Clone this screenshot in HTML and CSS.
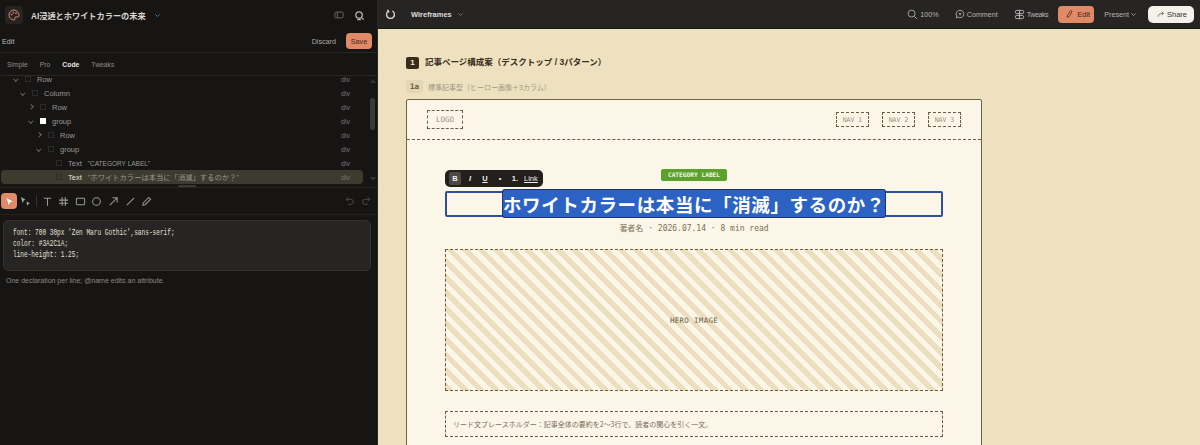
FILE: index.html
```html
<!DOCTYPE html>
<html lang="ja">
<head>
    <meta charset="UTF-8">
    <meta name="viewport" content="width=device-width, initial-scale=1.0">
    <title>Wireframes</title>
    <link rel="stylesheet" href="styles.css">
</head>
<body>
    <div class="app">
        <aside class="side">
            <div class="project">
                <div class="logo">
                    <svg width="12" height="12" viewBox="0 0 24 24" fill="none" stroke="#d98a6c" stroke-width="2"><path d="M12 2a10 10 0 1 0 0 20c2 0 2-1.5 1.5-3-.5-1.500.5-3 2.500-3H19a3 3 0 0 0 3-3c0-6-4.500-11-10-11z"/><circle cx="7.500" cy="11" r="1"/><circle cx="11" cy="7" r="1"/><circle cx="16" cy="8.500" r="1"/></svg>
                </div>
                <div class="project-title">AI浸透とホワイトカラーの未来</div>
                <svg class="chev" width="7" height="7" viewBox="0 0 10 10" fill="none" stroke="#777" stroke-width="1.300"><path d="M2 3.500l3 3 3-3"/></svg>
                <div class="project-icons">
                    <svg width="10" height="10" viewBox="0 0 12 12" fill="none" stroke="#666" stroke-width="1.200"><rect x="1" y="2.500" width="10" height="7" rx="1.500"/><path d="M4 2.500v7"/></svg>
                    <svg width="11" height="11" viewBox="0 0 12 12" fill="none" stroke="#b5b3ae" stroke-width="1.400"><circle cx="5.500" cy="5.500" r="3.500"/><path d="M8 8l2.500 2.500M3.500 10.500h4"/></svg>
                </div>
            </div>
            <div class="edit-bar">
                <span class="edit-label">Edit</span>
                <span class="discard">Discard</span>
                <button class="save">Save</button>
            </div>
            <div class="tabs">
                <span>Simple</span>
                <span>Pro</span>
                <span class="on">Code</span>
                <span>Tweaks</span>
            </div>
            <div class="tree">
                <div class="row lv0"><i class="arrow open"></i><b class="box"></b><span class="name">Row</span><em>div</em></div>
                <div class="row lv1"><i class="arrow open"></i><b class="box"></b><span class="name">Column</span><em>div</em></div>
                <div class="row lv2"><i class="arrow closed"></i><b class="box"></b><span class="name">Row</span><em>div</em></div>
                <div class="row lv2"><i class="arrow open"></i><b class="box white"></b><span class="name">group</span><em>div</em></div>
                <div class="row lv3"><i class="arrow closed"></i><b class="box"></b><span class="name">Row</span><em>div</em></div>
                <div class="row lv3"><i class="arrow open"></i><b class="box"></b><span class="name">group</span><em>div</em></div>
                <div class="row lv4"><i class="arrow"></i><b class="box"></b><span class="name">Text</span><span class="val">"CATEGORY LABEL"</span><em>div</em></div>
                <div class="row lv4 sel"><i class="arrow"></i><b class="box"></b><span class="name">Text</span><span class="val val-jp">"ホワイトカラーは本当に「消滅」するのか？"</span><em>div</em></div>
                <div class="scroll"><span class="up"></span><span class="thumb"></span><span class="down"></span></div>
                <span class="grip"></span>
            </div>
            <div class="tools">
                <span class="tool active"><svg width="9" height="9" viewBox="0 0 12 12" fill="#fff"><path d="M2 1l8 5-3.500 1L5 11z"/></svg></span>
                <span class="tool"><svg width="11" height="11" viewBox="0 0 12 12" fill="#aaa"><path d="M1 1l5 3-2 1-1 3zM7 6l4 2-2 .7L8 11z"/></svg></span>
                <span class="tool-sep"></span>
                <span class="tool"><svg width="11" height="11" viewBox="0 0 12 12" fill="none" stroke="#999" stroke-width="1.100"><path d="M2 2.500h8M6 2.500v8"/></svg></span>
                <span class="tool"><svg width="11" height="11" viewBox="0 0 12 12" fill="none" stroke="#999" stroke-width="1.100"><path d="M1 4.500h10M1 8h10M4.500 1v10M8 1v10"/></svg></span>
                <span class="tool"><svg width="11" height="11" viewBox="0 0 12 12" fill="none" stroke="#999" stroke-width="1.100"><rect x="1.500" y="2.500" width="9" height="7" rx="1"/></svg></span>
                <span class="tool"><svg width="11" height="11" viewBox="0 0 12 12" fill="none" stroke="#999" stroke-width="1.100"><circle cx="6" cy="6" r="4.200"/></svg></span>
                <span class="tool"><svg width="11" height="11" viewBox="0 0 12 12" fill="none" stroke="#999" stroke-width="1.100"><path d="M2 10l8-8M5 2h5v5"/></svg></span>
                <span class="tool"><svg width="11" height="11" viewBox="0 0 12 12" fill="none" stroke="#999" stroke-width="1.100"><path d="M2 10l8-8"/></svg></span>
                <span class="tool"><svg width="11" height="11" viewBox="0 0 12 12" fill="none" stroke="#999" stroke-width="1.100"><path d="M2 10l.5-2.500L8.500 1.500l2 2-6 6z"/></svg></span>
                <span class="undo">
                    <svg width="10" height="10" viewBox="0 0 12 12" fill="none" stroke="#4d4b48" stroke-width="1.200"><path d="M4 1.500L1.500 4 4 6.500M1.500 4H7a3 3 0 0 1 0 6H4"/></svg>
                    <svg width="10" height="10" viewBox="0 0 12 12" fill="none" stroke="#4d4b48" stroke-width="1.200"><path d="M8 1.500L10.500 4 8 6.500M10.500 4H5a3 3 0 0 0 0 6h3"/></svg>
                </span>
            </div>
            <div class="code"><div class="code-text">font: 700 30px 'Zen Maru Gothic',sans-serif;
color: #3A2C1A;
line-height: 1.25;</div></div>
            <p class="hint">One declaration per line; @name edits an attribute.</p>
        </aside>

        <main class="main">
            <header class="topbar">
                <svg width="11" height="11" viewBox="0 0 12 12" fill="none" stroke="#ddd" stroke-width="1.400"><path d="M4 2.200A4.300 4.300 0 1 0 8 2.200M4 2.200L2.500 1M4 2.200L3.800 4"/></svg>
                <span class="file">Wireframes</span>
                <svg width="7" height="7" viewBox="0 0 10 10" fill="none" stroke="#777" stroke-width="1.300"><path d="M2 3.500l3 3 3-3"/></svg>
                <div class="actions">
                    <span class="act"><svg width="11" height="11" viewBox="0 0 12 12" fill="none" stroke="#aaa" stroke-width="1"><circle cx="5" cy="5" r="3.800"/><path d="M8 8l3 3"/></svg>100%</span>
                    <span class="act"><svg width="10" height="10" viewBox="0 0 12 12" fill="none" stroke="#bbb" stroke-width="1"><path d="M6 1.500a4.500 4.500 0 1 1-2.500 8.200L1.500 10.500l.6-2A4.500 4.500 0 0 1 6 1.500zM6 4.500v3M4.500 6h3"/></svg>Comment</span>
                    <span class="act tight"><svg width="11" height="11" viewBox="0 0 12 12" fill="none" stroke="#bbb" stroke-width="1"><rect x="1.500" y="1.500" width="9" height="3.500" rx="1.500"/><rect x="1.500" y="7" width="9" height="3.500" rx="1.500"/><path d="M6 1.500v9"/></svg>Tweaks</span>
                    <button class="edit-btn"><svg width="9" height="10" viewBox="0 0 12 12" fill="none" stroke="#4a2416" stroke-width="1"><path d="M3 10.500l.5-3L7.500 1.500l2 1-3.500 6.500z"/></svg>Edit</button>
                    <span class="act present">Present <svg width="7" height="7" viewBox="0 0 10 10" fill="none" stroke="#aaa" stroke-width="1.200"><path d="M2 3.500l3 3 3-3"/></svg></span>
                    <button class="share"><svg width="8" height="8" viewBox="0 0 12 12" fill="none" stroke="#555" stroke-width="1.200"><path d="M1.500 10c.5-3.500 3-5 8-5M7 2.500L9.800 5 7 7.500"/></svg>Share</button>
                </div>
            </header>
            <section class="canvas">
                <h2 class="section-title"><span class="num">1</span><span class="section-text">記事ページ構成案（デスクトップ / 3パターン）</span></h2>
                <div class="variant"><span class="tag">1a</span>標準記事型（ヒーロー画像＋3カラム）</div>
                <div class="card">
                    <div class="card-head">
                        <span class="ph logo-ph">LOGO</span>
                        <span class="ph nav">NAV 1</span>
                        <span class="ph nav">NAV 2</span>
                        <span class="ph nav">NAV 3</span>
                    </div>
                    <div class="article">
                        <span class="badge">CATEGORY LABEL</span>
                        <div class="title-box">
                            <div class="format">
                                <span class="f-btn f-on">B</span>
                                <span class="f-btn f-i">I</span>
                                <span class="f-btn f-u">U</span>
                                <span class="f-btn">•</span>
                                <span class="f-btn">1.</span>
                                <span class="f-btn f-u f-link">Link</span>
                            </div>
                            <h1><span class="picked">ホワイトカラーは本当に「消滅」するのか？</span></h1>
                        </div>
                        <p class="meta">著者名 · 2026.07.14 · 8 min read</p>
                        <div class="hero">HERO IMAGE</div>
                        <div class="lead">リード文プレースホルダー：記事全体の要約を2〜3行で。読者の関心を引く一文。</div>
                    </div>
                </div>
            </section>
        </main>
    </div>
</body>
</html>
```

FILE: styles.css
```css
* {
    box-sizing: border-box;
}
html, body {
    margin: 0;
    height: 445px;
    overflow: hidden;
}
body {
    font-family: "Liberation Sans", "Noto Sans CJK JP", sans-serif;
    background: #161514;
    color: #ccc;
}
.app {
    display: grid;
    grid-template-columns: 378px 1fr;
    height: 445px;
}

/* left panel */
.side {
    background: #161514;
    border-right: 1px solid #2a2826;
    overflow: hidden;
}
.project {
    display: flex;
    align-items: center;
    height: 30px;
    padding-left: 5px;
}
.logo {
    width: 18px;
    height: 18px;
    border-radius: 4px;
    background: #262422;
    display: flex;
    align-items: center;
    justify-content: center;
}
.project-title {
    font-size: 8.200px;
    font-weight: 700;
    color: #d8d6d2;
    margin-left: 8px;
}
.chev {
    margin-left: 8px;
}
.project-icons {
    margin-left: auto;
    margin-right: 12px;
    display: flex;
    gap: 10px;
    align-items: center;
}
.edit-bar {
    display: flex;
    align-items: center;
    height: 23px;
    padding: 0 5px 0 2px;
    font-size: 7.200px;
    border-bottom: 1px solid #2a2826;
}
.edit-label {
    color: #bbb;
}
.discard {
    margin-left: auto;
    color: #aaa;
}
.save {
    margin-left: 10px;
    width: 26px;
    height: 16px;
    border: none;
    border-radius: 4px;
    background: #e08a68;
    color: #4a2416;
    font: 400 7.200px "Liberation Sans", sans-serif;
    padding: 0;
}
.tabs {
    display: flex;
    gap: 12px;
    align-items: center;
    height: 23px;
    padding-left: 7px;
    font-size: 6.800px;
    color: #8e8c88;
    border-bottom: 1px solid #2a2826;
}
.tabs .on {
    color: #e8e6e2;
    font-weight: 700;
}

/* element tree */
.tree {
    position: relative;
    height: 112px;
    padding: 0 1px;
    overflow: hidden;
    border-bottom: 1px solid #2a2826;
}
.row {
    display: flex;
    align-items: center;
    height: 14px;
    font-size: 7.500px;
    color: #9a9893;
    width: 362px;
    border-radius: 4px;
}
.lv0 { padding-left: 13px; margin-top: -4px; }
.lv1 { padding-left: 20px; }
.lv2 { padding-left: 28px; }
.lv3 { padding-left: 36px; }
.lv4 { padding-left: 44px; }
.arrow {
    width: 11px;
    height: 6px;
    position: relative;
}
.arrow.open::before,
.arrow.closed::before {
    content: "";
    position: absolute;
    left: 0;
    top: 1px;
    width: 2.500px;
    height: 2.500px;
    border-right: 1px solid #666;
    border-bottom: 1px solid #666;
    transform: rotate(45deg);
}
.arrow.closed::before {
    transform: rotate(-45deg);
}
.box {
    width: 6px;
    height: 6px;
    border: 1px solid #2e2c2a;
    margin: 0 6px 0 0;
}
.box.white {
    background: #fff;
    border-color: #fff;
}
.val {
    margin-left: 6px;
    font-size: 6.500px;
}
.val-jp {
    font-size: 7.300px;
}
.row em {
    margin-left: auto;
    margin-right: 13px;
    font-style: normal;
    font-size: 7px;
    color: #777;
}
.sel {
    background: #3d3b2d;
    color: #9a988e;
}
.sel .name {
    color: #e4e2da;
}
.scroll {
    position: absolute;
    top: 0;
    right: 1px;
    width: 6px;
    height: 111px;
}
.thumb {
    position: absolute;
    top: 22px;
    left: 0;
    width: 5px;
    height: 32px;
    border-radius: 3px;
    background: #3a3836;
}
.up, .down {
    position: absolute;
    left: 0;
    width: 0;
    height: 0;
    border-left: 3px solid transparent;
    border-right: 3px solid transparent;
}
.up {
    top: 3px;
    border-bottom: 4px solid #333;
}
.down {
    bottom: 6px;
    border-top: 4px solid #333;
}
.grip {
    position: absolute;
    left: 178px;
    bottom: 0;
    width: 18px;
    height: 2px;
    border-radius: 1px;
    background: #3a3836;
}
.tools {
    display: flex;
    align-items: center;
    height: 27px;
    padding: 0 6px 0 1px;
    gap: 4.600px;
    border-bottom: 1px solid #242220;
}
.tool {
    width: 12px;
    height: 15px;
    display: flex;
    align-items: center;
    justify-content: center;
}
.tool.active {
    width: 16px;
    height: 16px;
    margin-right: -2.600px;
    border-radius: 4px;
    background: #e08a68;
}
.tool-sep {
    width: 1px;
    height: 12px;
    background: #333;
}
.undo {
    margin-left: auto;
    display: flex;
    gap: 6px;
}
.code {
    margin: 5px 6px 0 3px;
    height: 51px;
    padding: 7px 9px;
    border: 1px solid #33312e;
    border-radius: 5px;
    background: #262523;
    color: #e2e0da;
}
.code-text {
    font: 8.500px/11px "Liberation Mono", monospace;
    white-space: pre;
    transform: scaleX(0.72);
    transform-origin: left;
}
.hint {
    margin: 6px 0 0 6px;
    font-size: 7px;
    color: #8a8884;
}

/* right side */
.main {
    min-width: 0;
    overflow: hidden;
}
.topbar {
    display: flex;
    align-items: center;
    height: 29px;
    padding: 0 0 0 7px;
    background: #272524;
    border-bottom: 1px solid #1a1918;
    font-size: 7.200px;
}
.file {
    margin: 0 5px 0 15px;
    font-size: 7.500px;
    font-weight: 700;
    color: #ddd;
}
.actions {
    margin-left: auto;
    display: flex;
    align-items: center;
}
.act {
    display: flex;
    align-items: center;
    gap: 2px;
    color: #b5b3ae;
    margin-right: 16px;
}
.tight {
    letter-spacing: -0.500px;
}
.edit-btn {
    display: flex;
    align-items: center;
    gap: 3px;
    width: 36px;
    height: 17px;
    padding: 0 0 0 7px;
    border: none;
    border-radius: 4px;
    background: #e08a68;
    color: #4a2416;
    font: 400 7.500px "Liberation Sans", sans-serif;
    margin: 0 10px 0 -6px;
}
.present {
    gap: 1px;
    margin-right: 11px;
}
.share {
    display: flex;
    align-items: center;
    gap: 2px;
    width: 46px;
    height: 17px;
    padding: 0 0 0 9px;
    margin-right: 6px;
    border: none;
    border-radius: 5px;
    background: #f4f1ea;
    color: #333;
    font: 400 7.500px "Liberation Sans", sans-serif;
}
.canvas {
    height: 416px;
    padding: 27px 0 0 28px;
    background: #ede1bf;
    overflow: hidden;
}
.section-title {
    display: flex;
    align-items: center;
    gap: 6px;
    margin: 0;
    height: 13px;
    font-size: 8.500px;
    font-weight: 700;
    color: #3a2c1a;
}
.section-text {
    margin-top: -3px;
}
.num {
    width: 13px;
    height: 12px;
    border-radius: 2px;
    background: #3a2c1a;
    color: #f8f1dc;
    font-size: 8px;
    display: flex;
    align-items: center;
    justify-content: center;
}
.variant {
    display: flex;
    align-items: center;
    gap: 5px;
    margin-top: 11px;
    height: 13px;
    font-size: 7px;
    color: #a39880;
}
.tag {
    width: 17px;
    height: 13px;
    border-radius: 2px;
    background: #e2d6b4;
    color: #6b5c42;
    font: 700 7.500px "DejaVu Sans Mono", monospace;
    display: flex;
    align-items: center;
    justify-content: center;
}
.card {
    width: 576px;
    height: 360px;
    margin-top: 6px;
    background: #fbf6e8;
    border: 1px solid #6f6048;
    border-radius: 2px;
    font-family: "DejaVu Sans Mono", "Noto Sans CJK JP", monospace;
}
.card-head {
    display: flex;
    align-items: center;
    height: 40px;
    padding: 0 20px;
    border-bottom: 1px dashed #6b5c42;
    gap: 13px;
}
.ph {
    border: 1px dashed #6b5c42;
    display: flex;
    align-items: center;
    justify-content: center;
    color: #9b8f76;
    font-size: 6.500px;
}
.logo-ph {
    width: 36px;
    height: 19px;
    margin-right: auto;
    font-size: 7.500px;
}
.nav {
    width: 33px;
    height: 15px;
}
.article {
    position: relative;
    padding: 29px 38px 0;
    display: flex;
    flex-direction: column;
    align-items: center;
}
.badge {
    height: 12px;
    padding: 0 7px;
    border-radius: 2px;
    background: #5ba22c;
    color: #f4f6e6;
    font-size: 6.200px;
    font-weight: 700;
    line-height: 12px;
}
.title-box {
    position: relative;
    width: 498px;
    height: 26px;
    margin-top: 10px;
    border: 2px solid #2a5298;
    border-radius: 2px;
    display: flex;
    justify-content: center;
}
.title-box h1 {
    margin: -3px 0 0;
    font: 700 18.500px/28px "Noto Sans CJK JP", sans-serif;
    letter-spacing: 0.600px;
}
.picked {
    display: block;
    height: 27px;
    background: #2b62c4;
    color: #fff;
    border-radius: 2px;
    box-shadow: 0 0 0 1px #1c3564;
}
.format {
    position: absolute;
    left: -2px;
    top: -23px;
    width: 98px;
    height: 17px;
    display: flex;
    align-items: center;
    padding: 0 2px 0 4px;
    gap: 3px;
    background: #221f1c;
    border-radius: 5px;
    z-index: 2;
    font: 700 7.500px "Liberation Sans", sans-serif;
    color: #eee;
}
.f-btn {
    min-width: 12px;
    height: 13px;
    line-height: 13px;
    text-align: center;
    border-radius: 2px;
}
.f-on {
    background: #4c4945;
}
.f-i {
    font-style: italic;
}
.f-u {
    text-decoration: underline;
}
.f-link {
    font-weight: 400;
}
.meta {
    margin: 5px 0 0;
    height: 14px;
    font-size: 8px;
    line-height: 14px;
    color: #7b6e58;
}
.hero {
    width: 498px;
    height: 142px;
    margin-top: 13px;
    border: 1px dashed #6b5c42;
    display: flex;
    align-items: center;
    justify-content: center;
    color: #6b5c42;
    font-size: 7.500px;
    letter-spacing: 0.300px;
    background: repeating-linear-gradient(45deg, #ecdfbd 0, #ecdfbd 5.500px, #fbf6e8 5.500px, #fbf6e8 11px);
}
.lead {
    width: 498px;
    height: 26px;
    margin-top: 20px;
    padding-left: 7px;
    border: 1px dashed #6b5c42;
    display: flex;
    align-items: center;
    color: #7b6e58;
    font-size: 7px;
    font-family: "Noto Sans CJK JP", sans-serif;
}
```
